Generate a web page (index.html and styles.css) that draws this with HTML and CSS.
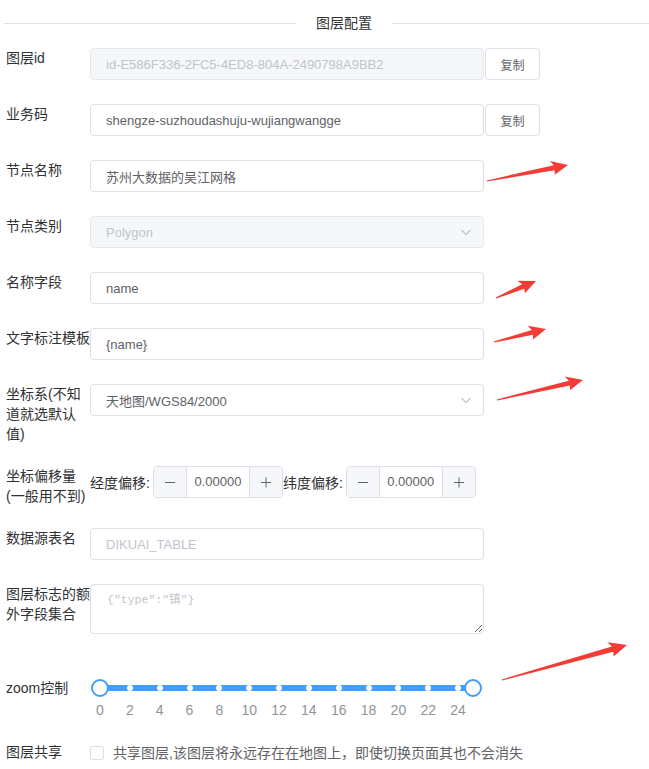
FILE: index.html
```html
<!DOCTYPE html>
<html lang="zh-CN">
<head>
    <meta charset="UTF-8">
    <meta name="viewport" content="width=device-width, initial-scale=1.0">
    <title>图层配置</title>
    <link rel="stylesheet" href="styles.css">
</head>
<body>
    <div class="panel">
        <div class="divider">
            <span class="divider-line divider-line--left"></span>
            <span class="divider-text">图层配置</span>
            <span class="divider-line"></span>
        </div>

        <form class="form">
            <div class="form-item">
                <label class="form-label">图层id</label>
                <div class="form-content">
                    <input class="input is-disabled" type="text" value="id-E586F336-2FC5-4ED8-804A-2490798A9BB2" disabled>
                    <button type="button" class="btn">复制</button>
                </div>
            </div>

            <div class="form-item">
                <label class="form-label">业务码</label>
                <div class="form-content">
                    <input class="input" type="text" value="shengze-suzhoudashuju-wujiangwangge">
                    <button type="button" class="btn">复制</button>
                </div>
            </div>

            <div class="form-item">
                <label class="form-label">节点名称</label>
                <div class="form-content">
                    <input class="input" type="text" value="苏州大数据的吴江网格">
                </div>
            </div>

            <div class="form-item">
                <label class="form-label">节点类别</label>
                <div class="form-content">
                    <div class="select is-disabled">
                        <span class="select-text">Polygon</span>
                        <svg class="select-arrow" width="12" height="12" viewBox="0 0 12 12"><polyline points="1.5,4 6,8.5 10.5,4" fill="none" stroke="currentColor" stroke-width="1.2"/></svg>
                    </div>
                </div>
            </div>

            <div class="form-item">
                <label class="form-label">名称字段</label>
                <div class="form-content">
                    <input class="input" type="text" value="name">
                </div>
            </div>

            <div class="form-item">
                <label class="form-label">文字标注模板</label>
                <div class="form-content">
                    <input class="input" type="text" value="{name}">
                </div>
            </div>

            <div class="form-item">
                <label class="form-label">坐标系(不知道就选默认值)</label>
                <div class="form-content">
                    <div class="select">
                        <span class="select-text">天地图/WGS84/2000</span>
                        <svg class="select-arrow" width="12" height="12" viewBox="0 0 12 12"><polyline points="1.5,4 6,8.5 10.5,4" fill="none" stroke="currentColor" stroke-width="1.2"/></svg>
                    </div>
                </div>
            </div>

            <div class="form-item">
                <label class="form-label">坐标偏移量(一般用不到)</label>
                <div class="form-content form-content--offset">
                    <span class="offset-label">经度偏移:</span>
                    <div class="number">
                        <span class="number-btn number-btn--minus"><svg width="12" height="12" viewBox="0 0 12 12"><line x1="1" y1="6.5" x2="11" y2="6.5" stroke="currentColor"/></svg></span>
                        <span class="number-value">0.00000</span>
                        <span class="number-btn number-btn--plus"><svg width="12" height="12" viewBox="0 0 12 12"><line x1="1" y1="6.5" x2="11" y2="6.5" stroke="currentColor"/><line x1="6" y1="1.5" x2="6" y2="11.5" stroke="currentColor"/></svg></span>
                    </div>
                    <span class="offset-label">纬度偏移:</span>
                    <div class="number">
                        <span class="number-btn number-btn--minus"><svg width="12" height="12" viewBox="0 0 12 12"><line x1="1" y1="6.5" x2="11" y2="6.5" stroke="currentColor"/></svg></span>
                        <span class="number-value">0.00000</span>
                        <span class="number-btn number-btn--plus"><svg width="12" height="12" viewBox="0 0 12 12"><line x1="1" y1="6.5" x2="11" y2="6.5" stroke="currentColor"/><line x1="6" y1="1.5" x2="6" y2="11.5" stroke="currentColor"/></svg></span>
                    </div>
                </div>
            </div>

            <div class="form-item">
                <label class="form-label">数据源表名</label>
                <div class="form-content">
                    <input class="input" type="text" placeholder="DIKUAI_TABLE">
                </div>
            </div>

            <div class="form-item">
                <label class="form-label">图层标志的额外字段集合</label>
                <div class="form-content">
                    <textarea class="textarea" placeholder='{"type":"镇"}'></textarea>
                </div>
            </div>

            <div class="form-item form-item--slider">
                <label class="form-label">zoom控制</label>
                <div class="form-content">
                    <div class="slider">
                        <div class="slider-runway">
                            <span class="slider-stop" style="left: 8%"></span>
                            <span class="slider-stop" style="left: 16%"></span>
                            <span class="slider-stop" style="left: 24%"></span>
                            <span class="slider-stop" style="left: 32%"></span>
                            <span class="slider-stop" style="left: 40%"></span>
                            <span class="slider-stop" style="left: 48%"></span>
                            <span class="slider-stop" style="left: 56%"></span>
                            <span class="slider-stop" style="left: 64%"></span>
                            <span class="slider-stop" style="left: 72%"></span>
                            <span class="slider-stop" style="left: 80%"></span>
                            <span class="slider-stop" style="left: 88%"></span>
                            <span class="slider-stop" style="left: 96%"></span>
                            <span class="slider-thumb" style="left: 0%"></span>
                            <span class="slider-thumb" style="left: 100%"></span>
                        </div>
                        <div class="slider-marks">
                            <span class="slider-mark" style="left: 0%">0</span>
                            <span class="slider-mark" style="left: 8%">2</span>
                            <span class="slider-mark" style="left: 16%">4</span>
                            <span class="slider-mark" style="left: 24%">6</span>
                            <span class="slider-mark" style="left: 32%">8</span>
                            <span class="slider-mark" style="left: 40%">10</span>
                            <span class="slider-mark" style="left: 48%">12</span>
                            <span class="slider-mark" style="left: 56%">14</span>
                            <span class="slider-mark" style="left: 64%">16</span>
                            <span class="slider-mark" style="left: 72%">18</span>
                            <span class="slider-mark" style="left: 80%">20</span>
                            <span class="slider-mark" style="left: 88%">22</span>
                            <span class="slider-mark" style="left: 96%">24</span>
                        </div>
                    </div>
                </div>
            </div>

            <div class="form-item">
                <label class="form-label">图层共享</label>
                <div class="form-content">
                    <label class="checkbox">
                        <span class="checkbox-box"></span>
                        <span class="checkbox-text">共享图层,该图层将永远存在在地图上，即使切换页面其也不会消失</span>
                    </label>
                </div>
            </div>
        </form>

        <!-- annotation arrows drawn over the form -->
        <svg class="annotations" width="649" height="769" viewBox="0 0 649 769">
            <g fill="#f43c36">
                <polygon transform="translate(487 181) rotate(-11.2)" points="0,-0.6 68.6,-2.5 65.6,-7.5 82.6,0 67.6,7 68.6,2.5 0,0.6"/>
                <polygon transform="translate(496 298) rotate(-23)" points="0,-0.6 29.5,-2.5 26.5,-7.5 43.5,0 28.5,7 29.5,2.5 0,0.6"/>
                <polygon transform="translate(494 342) rotate(-14)" points="0,-0.6 39.6,-2.5 36.6,-7.5 53.6,0 38.6,7 39.6,2.5 0,0.6"/>
                <polygon transform="translate(497 400) rotate(-13.1)" points="0,-0.6 74.3,-2.5 71.3,-7.5 88.3,0 73.3,7 74.3,2.5 0,0.6"/>
                <polygon transform="translate(502 680) rotate(-15.6)" points="0,-0.6 114.8,-2.8 111.8,-8 129.8,0 113.8,7.5 114.8,2.8 0,0.6"/>
            </g>
        </svg>
    </div>
</body>
</html>
```

FILE: styles.css
```css
* {
    margin: 0;
    padding: 0;
    box-sizing: border-box;
}

body {
    background-color: #ffffff;
    color: #303133;
    font-family: "Liberation Sans", "Noto Sans CJK SC", sans-serif;
    font-size: 14px;
}

.panel {
    position: relative;
    width: 649px;
    min-height: 769px;
    padding: 13px 0 0 4px;
    overflow: hidden;
}

/* Divider */
.divider {
    display: flex;
    align-items: center;
    height: 20px;
    margin-bottom: 15px;
}

.divider-line {
    flex: 1;
    height: 1px;
    background-color: #dcdfe6;
}

.divider-line--left {
    flex: 0 0 292px;
}

.divider-text {
    padding: 0 20px;
    font-size: 14px;
    line-height: 20px;
    color: #303133;
}

/* Form rows */
.form {
    padding-left: 2px;
}

.form-item {
    display: flex;
    align-items: flex-start;
    min-height: 34px;
    margin-bottom: 22px;
}

.form-label {
    flex: 0 0 84px;
    width: 84px;
    font-size: 14px;
    line-height: 20px;
    color: #303133;
}

.form-content {
    display: flex;
    align-items: center;
}

/* Inputs */
.input {
    width: 394px;
    height: 32px;
    padding: 0 15px;
    border: 1px solid #dcdfe6;
    border-radius: 4px;
    background-color: #ffffff;
    color: #606266;
    font-family: "Liberation Sans", "Noto Sans CJK SC", sans-serif;
    font-size: 13px;
    outline: none;
}

.input::placeholder {
    color: #c0c4cc;
}

.input.is-disabled {
    background-color: #f5f7fa;
    border-color: #e4e7ed;
    color: #c0c4cc;
}

.btn {
    width: 55px;
    height: 32px;
    margin-left: 1px;
    border: 1px solid #dcdfe6;
    border-radius: 4px;
    background-color: #ffffff;
    color: #606266;
    font-family: "Liberation Sans", "Noto Sans CJK SC", sans-serif;
    font-size: 12px;
}

/* Select */
.select {
    display: flex;
    align-items: center;
    justify-content: space-between;
    width: 394px;
    height: 32px;
    padding: 0 11px 0 15px;
    border: 1px solid #dcdfe6;
    border-radius: 4px;
    background-color: #ffffff;
    color: #606266;
    font-size: 13px;
}

.select.is-disabled {
    background-color: #f5f7fa;
    border-color: #e4e7ed;
    color: #c0c4cc;
}

.select-arrow {
    color: #c0c4cc;
}

/* Offset numbers */
.form-content--offset {
    height: 32px;
}

.offset-label {
    font-size: 14px;
    color: #303133;
}

.number {
    display: flex;
    width: 130px;
    height: 32px;
    margin-left: 3px;
    border: 1px solid #dcdfe6;
    border-radius: 4px;
    overflow: hidden;
}

.number-btn {
    display: flex;
    align-items: center;
    justify-content: center;
    width: 33px;
    background-color: #f5f7fa;
    color: #606266;
}

.number-btn--minus {
    border-right: 1px solid #dcdfe6;
}

.number-btn--plus {
    border-left: 1px solid #dcdfe6;
}

.number-value {
    flex: 1;
    text-align: center;
    line-height: 30px;
    font-size: 13px;
    color: #606266;
}

/* Textarea */
.textarea {
    display: block;
    width: 394px;
    height: 50px;
    padding: 5px 16px;
    border: 1px solid #dcdfe6;
    border-radius: 4px;
    font-family: "Liberation Mono", "Noto Sans CJK SC", monospace;
    font-size: 11.5px;
    line-height: 20px;
    color: #606266;
    resize: vertical;
    outline: none;
}

.textarea::placeholder {
    color: #c0c4cc;
}

/* Slider */
.form-item--slider .form-label {
    padding-top: 22px;
}

.slider {
    width: 373px;
    margin-left: 10px;
    padding-top: 29px;
}

.slider-runway {
    position: relative;
    height: 6px;
    border-radius: 3px;
    background-color: #409eff;
}

.slider-stop {
    position: absolute;
    top: 0;
    width: 6px;
    height: 6px;
    margin-left: -3px;
    border-radius: 50%;
    background-color: #ffffff;
}

.slider-thumb {
    position: absolute;
    top: -6px;
    width: 18px;
    height: 18px;
    margin-left: -9px;
    border: 2px solid #409eff;
    border-radius: 50%;
    background-color: #ffffff;
}

.slider-marks {
    position: relative;
    height: 20px;
    margin-top: 9px;
}

.slider-mark {
    position: absolute;
    top: 0;
    transform: translateX(-50%);
    font-size: 14px;
    line-height: 20px;
    color: #909399;
}

/* Checkbox */
.checkbox {
    display: flex;
    align-items: center;
    height: 20px;
    margin-top: 1px;
}

.checkbox-box {
    width: 14px;
    height: 14px;
    margin-right: 9px;
    border: 1px solid #dcdfe6;
    border-radius: 2px;
    background-color: #ffffff;
}

.checkbox-text {
    font-size: 14px;
    line-height: 20px;
    color: #606266;
}

/* Annotation overlay */
.annotations {
    position: absolute;
    top: 0;
    left: 0;
    pointer-events: none;
}
```
